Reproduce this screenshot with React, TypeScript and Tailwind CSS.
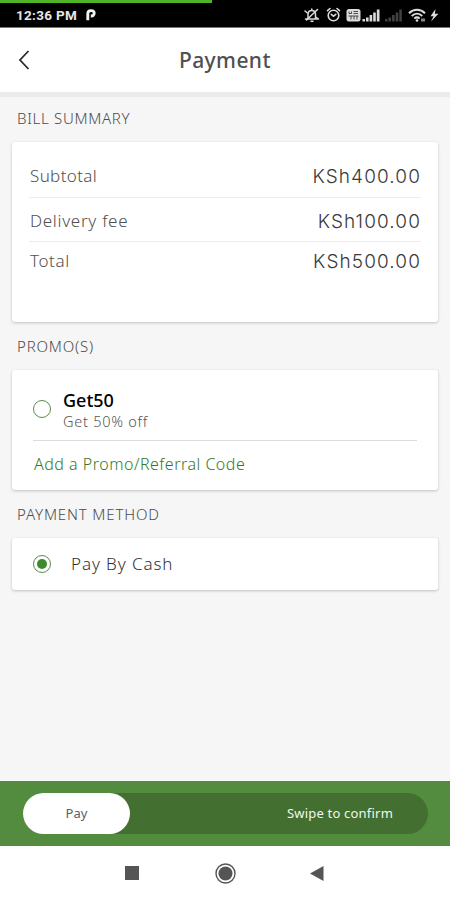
import type { ReactNode } from "react";

const bill = [
  {
    label: "Subtotal",
    amount: "KSh400.00",
    row: "h-[56px] pt-[13px] border-b",
    labelTracking: "tracking-[0.35px]",
  },
  {
    label: "Delivery fee",
    amount: "KSh100.00",
    row: "h-[44px] pt-[3px] border-b",
    labelTracking: "tracking-[0.7px]",
  },
  {
    label: "Total",
    amount: "KSh500.00",
    row: "h-[44px] -mt-[3px]",
    labelTracking: "tracking-[0.6px]",
  },
];

function StatusIcons() {
  return (
    <svg width="138" height="18" viewBox="0 0 138 18" fill="none" className="text-[#dcdcdc]" aria-hidden="true">
      {/* muted bell */}
      <g stroke="currentColor" strokeWidth="1.500" strokeLinecap="round" strokeLinejoin="round">
        <path d="M3.500 13h12M6 12.500V8.500C6 6 7.500 4.500 9.800 4.500S13.500 6 13.500 8.500v4M9.800 3v1.500M9 15.300h2" />
        <path d="M3 5l2.500 2M14.500 11.500l2 1.500M15.500 3.500L4.500 14" />
      </g>
      {/* alarm clock */}
      <g stroke="currentColor" strokeWidth="1.600" strokeLinecap="round">
        <circle cx="31.500" cy="9.500" r="5.300" />
        <path d="M29.300 8.300l2.200 2 2.300-2M25.500 4.700l2.500-2.200M37.500 4.700l-2.500-2.200" />
      </g>
      {/* VoLTE */}
      <rect x="44.500" y="3" width="14" height="12.500" rx="2.500" fill="currentColor" />
      <path d="M47 5.500v2h2.500v-2M51.500 5.500h4.500M51.500 7.500H56M46.500 10h10M49 10v3.500M52 10v3.500M55 10v3.500" stroke="#3a3a3a" strokeWidth="0.900" />
      {/* signal, first sim */}
      <path
        d="M60.500 13h2.500v2.500h-2.500zM64 11.500h2.600v4H64zM67.600 9h2.600v6.500h-2.600zM71.200 6.500h2.600v9h-2.600zM74.800 3.500h2.700v12h-2.700z"
        fill="currentColor"
      />
      {/* signal, second sim */}
      <path
        d="M83 13h2.500v2.500H83zM86.500 11.500h2.600v4h-2.600zM90.100 9h2.600v6.500h-2.600zM93.700 6.500h2.600v9h-2.600zM97.300 3.500h2.500v12h-2.500z"
        fill="#414141"
      />
      {/* wifi */}
      <g stroke="currentColor" strokeWidth="2">
        <path d="M107 7.200c4.700-4.500 11.300-4.500 16 0" />
        <path d="M109.700 10c3.200-3 7.400-3 10.600 0" />
        <path d="M112.300 12.600c1.700-1.500 3.700-1.500 5.400 0" />
      </g>
      <circle cx="115" cy="14.500" r="1.300" fill="currentColor" />
      <path d="M120 12.500v3M122 12.500v3" stroke="currentColor" strokeWidth="1.200" />
      {/* charging */}
      <path d="M133.500 3l-5 7.200h3L129 15.500l7.500-7.800h-3.600z" fill="currentColor" />
    </svg>
  );
}

function SectionTitle({ className, children }: { className: string; children: ReactNode }) {
  return <h2 className={`pl-[17px] text-[15px] leading-5 font-light text-[#4c4c4c] ${className}`}>{children}</h2>;
}

function Card({ className, children }: { className: string; children: ReactNode }) {
  return (
    <div className={`mx-3 rounded-[3px] bg-white shadow-[0_1px_3px_rgba(0,0,0,0.22)] ${className}`}>{children}</div>
  );
}

function Radio({ checked = false }: { checked?: boolean }) {
  return (
    <span className="flex size-[18px] shrink-0 items-center justify-center rounded-full border-[1.5px] border-[#5d8b48]">
      {checked && <span className="size-[10px] rounded-full bg-[#3f8a2d]" />}
    </span>
  );
}

export default function App() {
  return (
    <div className="flex h-[900px] w-[450px] flex-col overflow-hidden bg-[#f6f6f6] font-['Noto_Sans','Open_Sans',sans-serif]">
      <div className="h-7 shrink-0 border-b border-[#777] bg-black">
        <div className="h-[3px] w-[212px] bg-[#4fb526]" />
        <div className="flex h-6 items-center pl-[16px]">
          <span className="font-['Roboto',sans-serif] text-[13.5px] leading-6 font-bold tracking-[0.3px] whitespace-nowrap text-[#e6e6e6]">
            12:36 PM
          </span>
          <svg width="12" height="14" viewBox="0 0 12 14" className="ml-2 shrink-0" fill="none" aria-hidden="true">
            <path
              d="M2.800 12.300V5.500A3 3 0 0 1 5.800 2.600h.7a2.700 2.700 0 0 1 0 5.400H5.800"
              stroke="#f2f2f2"
              strokeWidth="2.900"
            />
          </svg>
          <div className="ml-auto w-[148px]">
            <StatusIcons />
          </div>
        </div>
      </div>

      <header className="flex h-[69px] shrink-0 items-start border-b-[5px] border-[#ebebeb] bg-white">
        <svg width="14" height="22" viewBox="0 0 14 22" className="mt-[22px] ml-[17px]" fill="none" aria-hidden="true">
          <path d="M11.500 1L3 10l8.500 9" stroke="#2b2b2b" strokeWidth="1.800" />
        </svg>
        <h1 className="mt-[18px] ml-[148px] text-[21px] leading-7 font-medium tracking-[0.4px] text-[#505050]">Payment</h1>
      </header>

      <main className="flex-1">
        <SectionTitle className="mt-[11px] tracking-[0.7px]">BILL SUMMARY</SectionTitle>
        <Card className="mt-[14px] h-[180px] px-[17px]">
          {bill.map((line) => (
            <div key={line.label} className={`flex items-center justify-between border-[#ececec] ${line.row}`}>
              <span className={`pl-px text-[17px] font-light text-[#4f4f4f] ${line.labelTracking}`}>{line.label}</span>
              <span className="pt-0.5 font-['Inter',sans-serif] text-[19px] font-light tracking-[1.1px] text-[#3a3a3a]">
                {line.amount}
              </span>
            </div>
          ))}
        </Card>

        <SectionTitle className="mt-[14px] tracking-[0.8px]">PROMO(S)</SectionTitle>
        <Card className="mt-[14px] h-[120px] px-[21px]">
          <div className="flex h-[71px] items-center border-b border-[#dcdcdc] pt-[7px]">
            <Radio />
            <div className="ml-3 pt-[3px]">
              <div className="text-[18px] leading-[22px] font-medium text-black">Get50</div>
              <div className="text-[14.5px] leading-[20px] font-light tracking-[0.75px] text-[#555]">Get 50% off</div>
            </div>
          </div>
          <div className="pt-[11px] pl-px text-[16px] leading-6 font-light tracking-[0.5px] text-[#35791f]">
            Add a Promo/Referral Code
          </div>
        </Card>

        <SectionTitle className="mt-[14px] tracking-[0.85px]">PAYMENT METHOD</SectionTitle>
        <Card className="mt-[14px] flex h-[52px] items-center px-[21px]">
          <Radio checked />
          <span className="ml-5 text-[17px] font-light tracking-[0.9px] text-[#333]">Pay By Cash</span>
        </Card>
      </main>

      <div className="h-[65px] shrink-0 bg-[#548c3f] pt-3 pl-[23px]">
        <div className="flex h-[41px] w-[405px] items-center justify-between rounded-full bg-[#436f30]">
          <div className="flex h-[41px] w-[107px] items-center justify-center rounded-full bg-white text-[13px] text-[#606060]">
            Pay
          </div>
          <span className="mr-[35px] text-[13px] tracking-[0.2px] text-[#f1f8ee]">Swipe to confirm</span>
        </div>
      </div>

      <nav className="flex h-[54px] shrink-0 items-center bg-white">
        <div className="ml-[125px] size-[14px] bg-[#555]" />
        <svg width="22" height="22" viewBox="0 0 22 22" className="ml-[76px]" aria-hidden="true">
          <circle cx="10.500" cy="11.500" r="9.500" fill="none" stroke="#555" strokeWidth="1.400" />
          <circle cx="10.500" cy="11.500" r="7" fill="#555" />
        </svg>
        <svg width="14" height="16" viewBox="0 0 14 16" className="ml-[73px]" aria-hidden="true">
          <path d="M0 8.500l13.500-7.500v15z" fill="#555" />
        </svg>
      </nav>
    </div>
  );
}
